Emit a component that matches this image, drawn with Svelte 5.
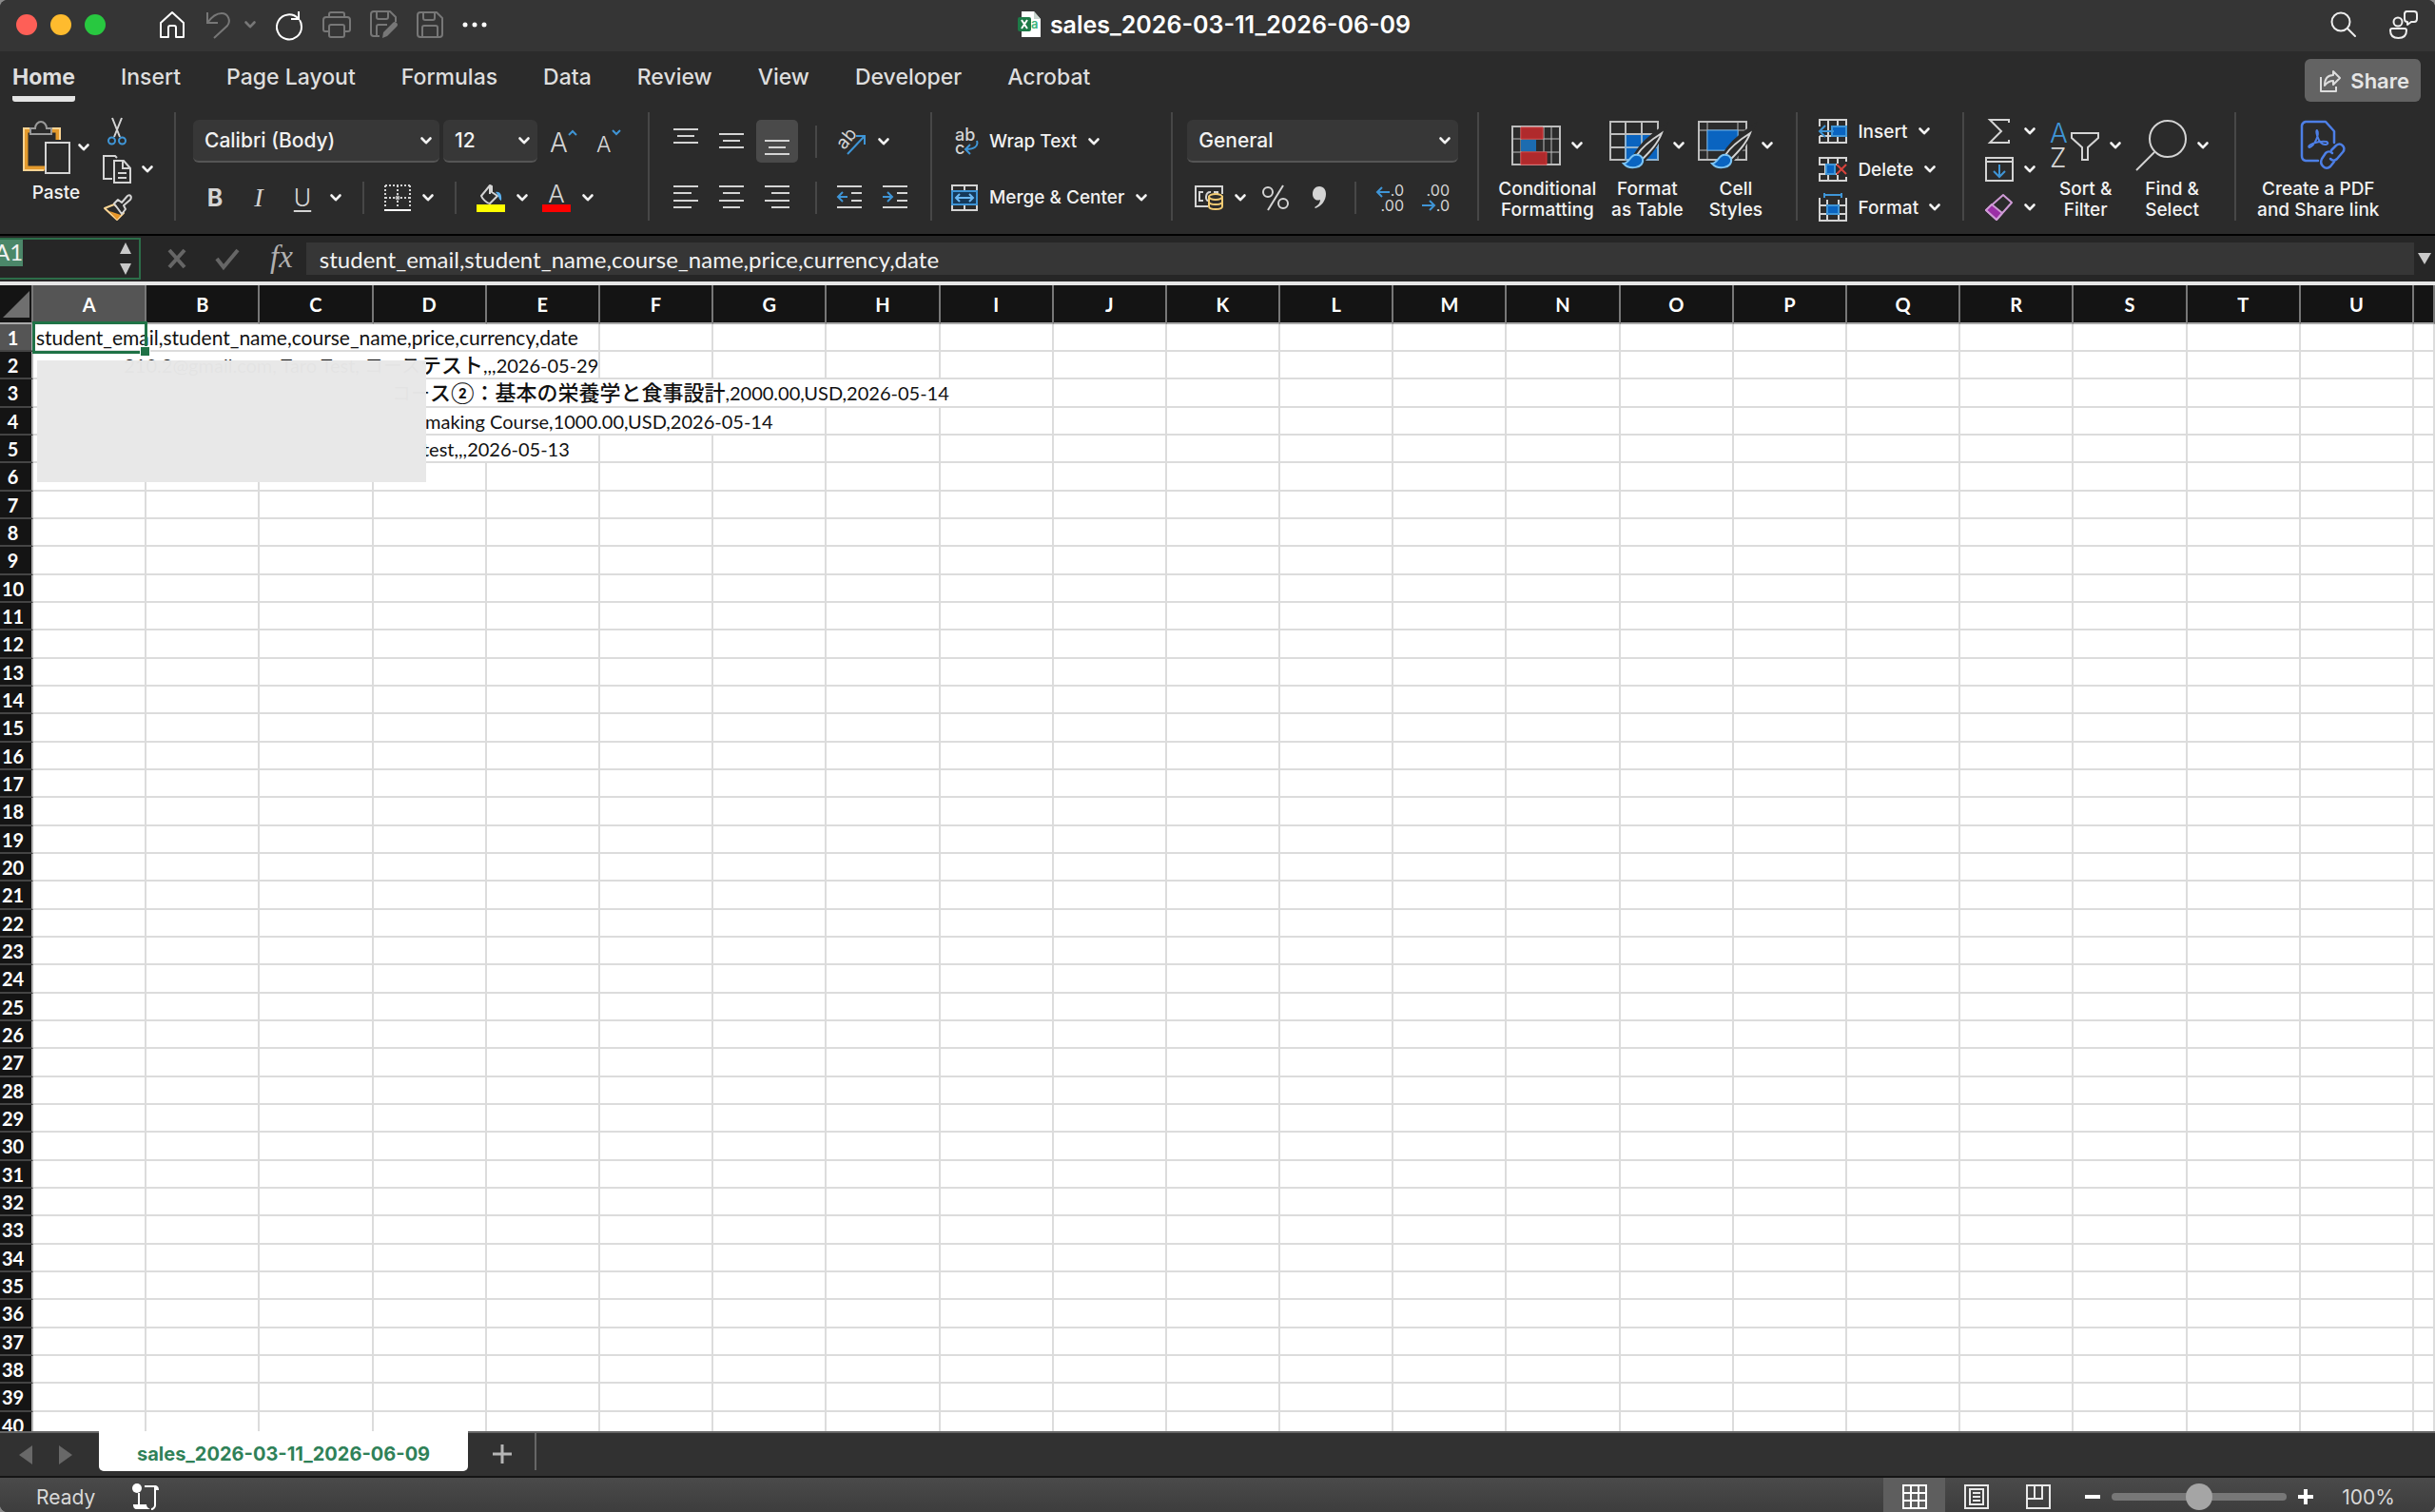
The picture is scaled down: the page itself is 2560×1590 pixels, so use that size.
<script lang="ts">
	interface Row {
		span: number;
		lead?: string;
		leadWidth?: number;
		ja?: string;
		text: string;
	}

	const COLUMNS = 'ABCDEFGHIJKLMNOPQRSTU'.split('');
	const ROW_COUNT = 40;
	const FILE_NAME = 'sales_2026-03-11_2026-06-09';
	const HEADER_LINE = 'student_email,student_name,course_name,price,currency,date';

	const tabs = ['Home', 'Insert', 'Page Layout', 'Formulas', 'Data', 'Review', 'View', 'Developer', 'Acrobat'];

	const data: Record<number, Row> = {
		1: { span: 5, text: HEADER_LINE },
		2: { span: 5, lead: '210.2@gmail.com, Taro Test, コース', leadWidth: 404, ja: 'テスト', text: ',,,2026-05-29' },
		3: { span: 9, lead: 'コー', leadWidth: 414, ja: 'ス②：基本の栄養学と食事設計', text: ',2000.00,USD,2026-05-14' },
		4: { span: 7, lead: '', leadWidth: 409, text: 'making Course,1000.00,USD,2026-05-14' },
		5: { span: 5, lead: '', leadWidth: 406, text: 'test,,,2026-05-13' }
	};

	const rows = Array.from({ length: ROW_COUNT }, (_, i) => i + 1);

	let activeTab = $state('Home');
	let zoom = $state(100);

	function restColumns(row: number) {
		const used = data[row]?.span ?? 0;
		return COLUMNS.slice(used);
	}
</script>

{#snippet chevron()}
	<svg class="chevron" width="12" height="8" viewBox="0 0 12 8" aria-hidden="true">
		<path d="M1.5 1.5 6 6.2 10.5 1.5" fill="none" stroke="currentColor" stroke-width="2.6" stroke-linecap="round" stroke-linejoin="round" />
	</svg>
{/snippet}

{#snippet lines(rowsOfLines: number[][])}
	<svg width="26" height="36" viewBox="0 0 26 36" stroke="#d4d4d4" stroke-width="2">
		{#each rowsOfLines as [x1, x2, y]}
			<path d="M{x1} {y}H{x2}" />
		{/each}
	</svg>
{/snippet}

{#snippet brush()}
	<path d="M56 9C44 17 33 28 28 37l6 5C42 34 51 22 56 9z" fill="#2b2b2b" stroke="#2b2b2b" stroke-width="6" />
	<path d="M55 13C44 20 34 28 29 36l5 5C42 33 51 24 55 13z" fill="#2b2b2b" stroke="#d4d4d4" stroke-width="2" />
	<path d="M30 36c-8-2-9 9-15 9 6 7 22 5 20-5-1-2-3-4-5-4z" fill="#0a64c0" stroke="#7cc4f4" stroke-width="2" />
{/snippet}

<div class="window">
	<header class="titlebar">
		<div class="lights">
			<button class="light red" aria-label="Close"></button>
			<button class="light amber" aria-label="Minimize"></button>
			<button class="light green" aria-label="Zoom window"></button>
		</div>
		<div class="quick">
			<button aria-label="Home">
				<svg width="28" height="30" viewBox="0 0 28 30" fill="none" stroke="#fff" stroke-width="2" stroke-linejoin="round">
					<path d="M2 13 14 2l12 11v15h-8V18a2 2 0 0 0-2-2h-4a2 2 0 0 0-2 2v10H2z" />
				</svg>
			</button>
			<span class="undo">
				<button aria-label="Undo">
					<svg width="28" height="30" viewBox="0 0 28 30" fill="none" stroke="#777" stroke-width="2">
						<path d="M3 2v11h11M3 13C8 6 13 3 18 3c7 0 10 8 6 13L10 29" />
					</svg>
				</button>
				<button class="dim" aria-label="Undo history">{@render chevron()}</button>
			</span>
			<button aria-label="Repeat">
				<svg width="30" height="30" viewBox="0 0 30 30" fill="none" stroke="#fff" stroke-width="2">
					<path d="M25 1v8h-8M24.500 8.500A13 13 0 1 0 28 17c0-3-.6-5-2-7" />
				</svg>
			</button>
			<button aria-label="Print">
				<svg width="30" height="28" viewBox="0 0 30 28" fill="none" stroke="#777" stroke-width="2" stroke-linejoin="round">
					<path d="M7 6V3a2 2 0 0 1 2-2h12a2 2 0 0 1 2 2v3M7 21H3a2 2 0 0 1-2-2V9a3 3 0 0 1 3-3h22a3 3 0 0 1 3 3v10a2 2 0 0 1-2 2h-4" />
					<rect x="7" y="14" width="16" height="13" rx="2" />
				</svg>
			</button>
			<button aria-label="Save as">
				<svg width="29" height="30" viewBox="0 0 29 30" fill="none" stroke="#777" stroke-width="2" stroke-linejoin="round">
					<path d="M10 27H4a3 3 0 0 1-3-3V4a3 3 0 0 1 3-3h17l6 6v5M7 1v6a2 2 0 0 0 2 2h8a2 2 0 0 0 2-2V1M7 27V17a2 2 0 0 1 2-2h9" />
					<path d="m14 23 10-10a2.500 2.500 0 0 1 4 4L18 27l-5 2z" fill="#777" stroke="none" />
				</svg>
			</button>
			<button aria-label="Save">
				<svg width="28" height="28" viewBox="0 0 28 28" fill="none" stroke="#777" stroke-width="2" stroke-linejoin="round">
					<path d="M4 1h17l6 6v17a3 3 0 0 1-3 3H4a3 3 0 0 1-3-3V4a3 3 0 0 1 3-3zM7 1v6a2 2 0 0 0 2 2h8a2 2 0 0 0 2-2V1M6 27V17a2 2 0 0 1 2-2h12a2 2 0 0 1 2 2v10" />
				</svg>
			</button>
			<button aria-label="More commands">
				<svg width="26" height="6" viewBox="0 0 26 6" fill="#fff">
					<circle cx="3" cy="3" r="2.500" /><circle cx="13" cy="3" r="2.500" /><circle cx="23" cy="3" r="2.500" />
				</svg>
			</button>
		</div>
		<h1>
			<svg width="25" height="28" viewBox="0 0 25 28" aria-hidden="true">
				<path d="M4 0h13l7 8v19H4z" fill="#fff" />
				<path d="M17 0v8h7z" fill="#c9d6cf" />
				<rect x="0" y="6" width="14" height="15" rx="2" fill="#1d7a47" />
				<path d="m4 9 6 9M10 9l-6 9" stroke="#fff" stroke-width="2" />
				<text x="14" y="18" font-size="13" fill="#3cb47c">a</text>
			</svg>
			{FILE_NAME}
		</h1>
		<div class="corner">
			<button aria-label="Search">
				<svg width="28" height="28" viewBox="0 0 28 28" fill="none" stroke="#eee" stroke-width="2" stroke-linecap="round">
					<circle cx="11" cy="11" r="9.500" /><path d="m18 18 8 8" />
				</svg>
			</button>
			<button aria-label="Comments and people">
				<svg width="30" height="30" viewBox="0 0 30 30" fill="none" stroke="#eee" stroke-width="2" stroke-linejoin="round">
					<circle cx="9" cy="12" r="4.500" />
					<path d="M3 19h13a2 2 0 0 1 2 2c0 5-3 8-8.500 8S1 26 1 21a2 2 0 0 1 2-2zM18 1h8a3 3 0 0 1 3 3v5a3 3 0 0 1-3 3h-3l-4 3v-3c-2 0-3-1-3-3V4a3 3 0 0 1 2-3z" />
				</svg>
			</button>
		</div>
	</header>

	<nav class="tabs" aria-label="Ribbon tabs">
		{#each tabs as tab}
			<button class="tab" class:active={tab === activeTab} onclick={() => (activeTab = tab)}>{tab}</button>
		{/each}
		<button class="share">
			<svg width="24" height="24" viewBox="0 0 24 24" fill="none" stroke="#ddd" stroke-width="2" stroke-linejoin="round" aria-hidden="true">
				<path d="M2 8v15h16v-5M15 2l7 7-7 7v-4c-4 0-6 1-9 5 0-7 3-11 9-11z" />
			</svg>
			Share
		</button>
	</nav>

	<div class="ribbon">
		<section class="group clipboard" aria-label="Clipboard">
			<button class="big paste">
				<span class="big-icon">
					<svg width="50" height="56" viewBox="0 0 50 56" fill="none" stroke-width="2">
						<path d="M10 10H3v40h20M30 10h7v10" stroke="#e39a2d" stroke-width="5" />
						<path d="M9 8H1v44h21M30 8h9v12" stroke="#f9d494" />
						<path d="M8 14V8h5c0-4 3-7 6-7s6 3 6 7h5v6z" fill="#2b2b2b" stroke="#999" />
						<rect x="24" y="23" width="25" height="32" fill="#2b2b2b" stroke="#d4d4d4" />
					</svg>
					{@render chevron()}
				</span>
				Paste
			</button>
			<div class="stack">
				<button aria-label="Cut">
					<span class="icon-box">
						<svg width="20" height="30" viewBox="0 0 20 30" fill="none" stroke-width="2">
							<path d="m5 1 8 20M15 1 7 21" stroke="#d4d4d4" />
							<circle cx="4.500" cy="25" r="3.500" stroke="#3f95d6" /><circle cx="15.500" cy="25" r="3.500" stroke="#3f95d6" />
						</svg>
					</span>
				</button>
				<button aria-label="Copy">
					<span class="icon-box">
						<svg width="30" height="30" viewBox="0 0 30 30" fill="none" stroke="#d4d4d4" stroke-width="2">
							<path d="M10 25H1V1h12l2 2M12 6h10l7 8v15H12zM21 6v8h8M16 19h9M16 24h9" />
						</svg>
					</span>
					{@render chevron()}
				</button>
				<button aria-label="Format painter">
					<span class="icon-box">
						<svg width="30" height="28" viewBox="0 0 30 28" stroke-width="2" stroke-linejoin="round">
							<path d="M2 15 12 11l10 9-7 7z" fill="#2b2b2b" stroke="#f9d494" />
							<path d="m7 18 12 4-4 5z" fill="#e8972a" />
							<path d="m12 10 4-4 4 3 6-7c3-2 5 1 3 4l-7 6 2 4-4 5z" fill="#2b2b2b" stroke="#d4d4d4" />
						</svg>
					</span>
				</button>
			</div>
		</section>

		<section class="group rows font" aria-label="Font">
			<div class="row">
				<span class="picker family">
					<select aria-label="Font family"><option>Calibri (Body)</option></select>
					{@render chevron()}
				</span>
				<span class="picker size">
					<select aria-label="Font size"><option>12</option></select>
					{@render chevron()}
				</span>
				<button class="grow" aria-label="Increase font size">
					<svg width="28" height="30" viewBox="0 0 28 30">
						<text x="0" y="26" font-size="28" font-weight="300" fill="#d4d4d4">A</text>
						<path d="m20 8 4-4 4 4" fill="none" stroke="#3f95d6" stroke-width="2" />
					</svg>
				</button>
				<button class="grow" aria-label="Decrease font size">
					<svg width="28" height="30" viewBox="0 0 28 30">
						<text x="0" y="26" font-size="23" font-weight="300" fill="#d4d4d4">A</text>
						<path d="m17 3 4 4 4-4" fill="none" stroke="#3f95d6" stroke-width="2" />
					</svg>
				</button>
			</div>
			<div class="row">
				<button class="letter bold">B</button>
				<button class="letter italic">I</button>
				<button class="letter underline">U</button>
				<button class="drop tight" aria-label="Underline style">{@render chevron()}</button>
				<span class="sep"></span>
				<button class="drop" aria-label="Borders">
					<svg width="28" height="28" viewBox="0 0 28 28" fill="none" stroke="#d4d4d4" stroke-width="2">
						<path d="M1 1h26M1 14h26M1 1v24M27 1v24M14 1v24" stroke-dasharray="2 2" />
						<circle cx="14" cy="14" r="2" stroke-width="1" /><path d="M0 27h28" stroke="#fff" />
					</svg>
					{@render chevron()}
				</button>
				<span class="sep"></span>
				<button class="drop" aria-label="Fill color">
					<svg width="30" height="30" viewBox="0 0 30 30">
						<path d="m5 13 9-11 2 1v6l6 4-8 8c-3 0-8-5-9-8zM14 2v9" fill="none" stroke="#d4d4d4" stroke-width="2" stroke-linejoin="round" />
						<path d="M20 9c4-1 7 2 6 9-3-1-2-5-6-9z" fill="#5ab0ee" />
						<rect y="22" width="30" height="8" fill="#ffff00" />
					</svg>
					{@render chevron()}
				</button>
				<button class="drop" aria-label="Font color">
					<svg width="30" height="30" viewBox="0 0 30 30">
						<text x="15" y="20" font-size="26" font-weight="300" fill="#d4d4d4" text-anchor="middle">A</text>
						<rect y="22" width="30" height="8" fill="#fd0100" />
					</svg>
					{@render chevron()}
				</button>
			</div>
		</section>

		<section class="group rows align" aria-label="Alignment">
			<div class="row">
				<button class="cell-button" aria-label="Align top">{@render lines([[0, 26, 5], [4, 22, 12], [0, 26, 19]])}</button>
				<button class="cell-button" aria-label="Align middle">{@render lines([[0, 26, 10], [4, 22, 17], [0, 26, 24]])}</button>
				<button class="cell-button pressed" aria-label="Align bottom">{@render lines([[0, 26, 17], [4, 22, 24], [0, 26, 31]])}</button>
				<span class="sep"></span>
				<button class="drop" aria-label="Orientation">
					<svg width="31" height="30" viewBox="0 0 31 30">
						<text transform="rotate(-50 8 22)" x="6" y="23" font-size="19" fill="#d4d4d4">ab</text>
						<path d="M11 28 29 9M20 9h9v9" fill="none" stroke="#3f95d6" stroke-width="2" />
					</svg>
					{@render chevron()}
				</button>
			</div>
			<div class="row">
				<button class="cell-button" aria-label="Align left">{@render lines([[0, 26, 6], [0, 19, 13], [0, 26, 21], [0, 19, 28]])}</button>
				<button class="cell-button" aria-label="Center">{@render lines([[0, 26, 6], [4, 22, 13], [0, 26, 21], [4, 22, 28]])}</button>
				<button class="cell-button" aria-label="Align right">{@render lines([[0, 26, 6], [7, 26, 13], [0, 26, 21], [7, 26, 28]])}</button>
				<span class="sep"></span>
				<button class="indent" aria-label="Decrease indent">
					<svg width="26" height="36" viewBox="0 0 26 36" fill="none" stroke="#d4d4d4" stroke-width="2">
						<path d="M0 6h26M15 13h11M15 21h11M0 28h26" />
						<path d="M11 17H1M6 12l-5 5 5 5" stroke="#3f95d6" />
					</svg>
				</button>
				<button class="indent" aria-label="Increase indent">
					<svg width="26" height="36" viewBox="0 0 26 36" fill="none" stroke="#d4d4d4" stroke-width="2">
						<path d="M0 6h26M15 13h11M15 21h11M0 28h26" />
						<path d="M0 17h10M5 12l5 5-5 5" stroke="#3f95d6" />
					</svg>
				</button>
			</div>
		</section>

		<section class="group rows wrap" aria-label="Cell text">
			<div class="row">
				<button class="labelled">
					<svg width="28" height="30" viewBox="0 0 28 30">
						<text x="4" y="14" font-size="18" fill="#d4d4d4">ab</text>
						<text x="4" y="28" font-size="18" fill="#d4d4d4">c</text>
						<path d="M27 14c2 6-3 9-12 9M20 18l-5 5 5 5" fill="none" stroke="#3f95d6" stroke-width="2" />
					</svg>
					Wrap Text {@render chevron()}
				</button>
			</div>
			<div class="row">
				<button class="labelled">
					<svg width="28" height="28" viewBox="0 0 28 28" fill="none" stroke-width="2">
						<path d="M1 1h26v26H1zM14 1v6M14 21v6" stroke="#d4d4d4" />
						<path d="M1 7h26v14H1z" fill="#15395a" stroke="#3f95d6" />
						<path d="M5 14h18M9 10l-4 4 4 4M19 10l4 4-4 4" stroke="#6bb8f2" />
					</svg>
					Merge &amp; Center {@render chevron()}
				</button>
			</div>
		</section>

		<section class="group rows number" aria-label="Number">
			<div class="row">
				<span class="picker format">
					<select aria-label="Number format"><option>General</option></select>
					{@render chevron()}
				</span>
			</div>
			<div class="row number-row">
				<button class="drop" aria-label="Accounting format">
					<svg width="30" height="26" viewBox="0 0 30 26" fill="none" stroke-width="2">
						<path d="M14 22H1V1h28v8" stroke="#d4d4d4" />
						<path d="M9 7H5v9h4M17 7c-6-1-6 9-3 9M20 7h4v3" stroke="#d4d4d4" />
						<path d="M15 12v10c0 4 14 4 14 0V12z" fill="#2b2b2b" stroke="#f3cc74" />
						<ellipse cx="22" cy="12" rx="7" ry="3" fill="#2b2b2b" stroke="#f3cc74" />
						<path d="M15 17c0 4 14 4 14 0" stroke="#f3cc74" />
					</svg>
					{@render chevron()}
				</button>
				<button class="letter" aria-label="Percent style">
					<svg width="28" height="28" viewBox="0 0 28 28" fill="none" stroke="#d4d4d4" stroke-width="2">
						<circle cx="6" cy="8" r="5" /><circle cx="22" cy="20" r="5" /><path d="M22 1 6 27" />
					</svg>
				</button>
				<button class="letter" aria-label="Comma style">
					<svg width="14" height="24" viewBox="0 0 14 24" fill="#d4d4d4">
						<path d="M7 0c5 0 7 4 7 8 0 7-5 13-11 15l-1-1c4-2 6-5 6-8-5 2-8-2-8-6 0-5 3-8 7-8z" />
					</svg>
				</button>
				<span class="sep"></span>
				<span class="decimals">
					<button aria-label="Increase decimal">
						<svg width="30" height="30" viewBox="0 0 30 30">
							<text x="29" y="13" font-size="16" fill="#d4d4d4" text-anchor="end">.0</text>
							<text x="29" y="29" font-size="16" fill="#d4d4d4" text-anchor="end">.00</text>
							<path d="M14 9H1M6 4 1 9l5 5" fill="none" stroke="#3f95d6" stroke-width="2" />
						</svg>
					</button>
					<button aria-label="Decrease decimal">
						<svg width="30" height="30" viewBox="0 0 30 30">
							<text x="29" y="13" font-size="16" fill="#d4d4d4" text-anchor="end">.00</text>
							<text x="29" y="29" font-size="16" fill="#d4d4d4" text-anchor="end">.0</text>
							<path d="M0 23h13M8 18l5 5-5 5" fill="none" stroke="#3f95d6" stroke-width="2" />
						</svg>
					</button>
				</span>
			</div>
		</section>

		<section class="group styles" aria-label="Styles">
			<button class="big">
				<span class="big-icon">
					<svg width="52" height="42" viewBox="0 0 52 42" fill="none" stroke="#bdbdbd" stroke-width="2">
						<path d="M1 14h50M1 28h50M10 1v40M42 1v40M34 1v40" stroke-width="1" />
						<rect x="1" y="1" width="50" height="40" />
						<path d="M10 2h23v12H10zM10 28h27v13H10z" fill="#b02a2c" stroke="#d33a3c" stroke-width="1" />
						<path d="M10 15h16v12H10z" fill="#1c6cb0" stroke="none" />
						<path d="M26 15h7v12h-7z" fill="#2b2b2b" stroke="none" />
					</svg>
					{@render chevron()}
				</span>
				Conditional<br />Formatting
			</button>
			<button class="big">
				<span class="big-icon">
					<svg width="56" height="52" viewBox="0 0 56 52" fill="none" stroke="#bdbdbd" stroke-width="2">
						<path d="M17 15h34v26H17z" fill="#0a64c0" stroke="none" />
						<path d="M1 1h50v40H1zM1 14h50M1 28h50M17 1v40M34 1v40" />
						<path d="M18 28h33M34 15v26M51 15v26H17V15" stroke="#5da9e8" stroke-width="1" />
						{@render brush()}
					</svg>
					{@render chevron()}
				</span>
				Format<br />as Table
			</button>
			<button class="big">
				<span class="big-icon">
					<svg width="56" height="52" viewBox="0 0 56 52" fill="none" stroke="#bdbdbd" stroke-width="2">
						<path d="M1 1h50v40H1z" />
						<path d="M10 1v40M42 1v40M1 10h50M1 31h50" stroke-width="1" />
						<path d="M10 10h32v21H10z" fill="#0a64c0" stroke="#5da9e8" stroke-width="1" />
						{@render brush()}
					</svg>
					{@render chevron()}
				</span>
				Cell<br />Styles
			</button>
		</section>

		<section class="group cells" aria-label="Cells">
			<div class="stack">
				<button class="labelled">
					<svg width="30" height="26" viewBox="0 0 30 26" fill="none" stroke="#d4d4d4" stroke-width="2">
						<path d="M1 8V1h28v24H1v-7M1 18h28M10 1v24M20 1v24" />
						<path d="M14 8h15v10H14z" fill="#0a64c0" stroke="#3f95d6" />
						<path d="M16 13H1M7 7l-6 6 6 6" stroke="#3f95d6" />
					</svg>
					Insert {@render chevron()}
				</button>
				<button class="labelled">
					<svg width="30" height="26" viewBox="0 0 30 26" fill="none" stroke="#d4d4d4" stroke-width="2">
						<path d="M29 5V1H1v7h18M1 8h6v10H1v7h28v-4M1 18h18M10 1v7M20 1v6M10 18v7M20 19v6" />
						<path d="M8 8h9v10H8z" fill="#0a64c0" stroke="#3f95d6" />
						<path d="m19 8 10 10M29 8 19 18" stroke="#d9433c" />
					</svg>
					Delete {@render chevron()}
				</button>
				<button class="labelled">
					<svg width="30" height="30" viewBox="0 0 30 30" fill="none" stroke="#d4d4d4" stroke-width="2">
						<path d="M1 5v24h28V5M1 13h28M1 22h28M9 7v22M21 7v22" />
						<path d="M9 13h12v9H9z" fill="#0a64c0" stroke="#3f95d6" />
						<path d="M6 2h18M6 0v5M24 0v5" stroke="#3f95d6" />
					</svg>
					Format {@render chevron()}
				</button>
			</div>
		</section>

		<section class="group editing" aria-label="Editing">
			<div class="stack">
				<button aria-label="AutoSum">
					<span class="icon-box">
						<svg width="24" height="26" viewBox="0 0 24 26" fill="none" stroke="#d4d4d4" stroke-width="2">
							<path d="M22 4V1H2l12 12L2 25h20v-3" />
						</svg>
					</span>
					{@render chevron()}
				</button>
				<button aria-label="Fill">
					<span class="icon-box">
						<svg width="30" height="26" viewBox="0 0 30 26" fill="none" stroke="#d4d4d4" stroke-width="2">
							<path d="M1 1h28v24H1zM1 5h28" />
							<path d="M15 8v13M9 15l6 6 6-6" stroke="#3f95d6" />
						</svg>
					</span>
					{@render chevron()}
				</button>
				<button aria-label="Clear">
					<span class="icon-box">
						<svg width="30" height="28" viewBox="0 0 30 28" fill="none" stroke-width="2" stroke-linejoin="round">
							<path d="M1 17 19 1l9 8-16 18z" stroke="#cf9bd6" />
							<path d="m1 17 6-6 11 9-6 7z" fill="#9b2fa6" stroke="#cf9bd6" />
						</svg>
					</span>
					{@render chevron()}
				</button>
			</div>
			<button class="big">
				<span class="big-icon">
					<svg width="52" height="52" viewBox="0 0 52 52" fill="none" stroke="#d4d4d4" stroke-width="2">
						<text x="0" y="23" font-size="28" font-weight="300" fill="#3f95d6" stroke="none">A</text>
						<text x="0" y="49" font-size="28" font-weight="300" fill="#d4d4d4" stroke="none">Z</text>
						<path d="M23 13h28v5L40 28v13h-6V28L23 18z" />
					</svg>
					{@render chevron()}
				</span>
				Sort &amp;<br />Filter
			</button>
			<button class="big">
				<span class="big-icon">
					<svg width="54" height="54" viewBox="0 0 54 54" fill="none" stroke="#d4d4d4" stroke-width="2">
						<circle cx="34" cy="20" r="19" /><path d="M20 34 1 53" />
					</svg>
					{@render chevron()}
				</span>
				Find &amp;<br />Select
			</button>
		</section>

		<section class="group acrobat" aria-label="Adobe Acrobat">
			<button class="big">
				<span class="big-icon">
					<svg width="58" height="54" viewBox="-10 0 58 54" fill="none" stroke="#4d7fe6" stroke-width="2.500" stroke-linecap="round" stroke-linejoin="round">
						<path d="M19 43H6a5 5 0 0 1-4-5V6a5 5 0 0 1 4-4h21l9 10v12" />
						<path d="M18 11c3 4-3 17-8 18-4-2 8-7 18-6 4 2-2 5-6 1-3-3-6-12-4-13z" stroke-width="2" />
						<path d="m33 32 5-5c5-4 11 2 7 7l-6 7c-2 2-5 2-7 0M34 35c-2-2-5-2-7 0l-4 6c-3 6 4 13 9 8l4-5" />
					</svg>
				</span>
				Create a PDF<br />and Share link
			</button>
		</section>
	</div>

	<div class="formula-bar">
		<div class="name-box">
			<input aria-label="Name box" value="A1" />
			<svg width="14" height="34" viewBox="0 0 14 34" fill="#c9c9c9" aria-hidden="true">
				<path d="M7 0l6 12H1zM7 34 1 22h12z" />
			</svg>
		</div>
		<button class="entry" aria-label="Cancel entry">
			<svg width="24" height="24" viewBox="0 0 24 24" fill="none" stroke="#666" stroke-width="4"><path d="m4 3 16 18M20 3 4 21" /></svg>
		</button>
		<button class="entry confirm" aria-label="Confirm entry">
			<svg width="26" height="24" viewBox="0 0 26 24" fill="none" stroke="#666" stroke-width="4"><path d="m2 12 7 9L24 3" /></svg>
		</button>
		<button class="fx" aria-label="Insert function">fx</button>
		<input class="formula" aria-label="Formula" value={HEADER_LINE} />
		<button class="expand" aria-label="Expand formula bar">
			<svg width="14" height="14" viewBox="0 0 14 14" fill="#c9c9c9"><path d="M0 1h14L7 13z" /></svg>
		</button>
	</div>

	<main class="sheet">
		<table>
			<colgroup>
				<col class="row-col" />
				{#each COLUMNS as column (column)}<col />{/each}
				<col class="edge-col" />
			</colgroup>
			<thead>
				<tr>
					<th class="select-all">
						<svg width="28" height="28" viewBox="0 0 28 28" aria-hidden="true"><path d="M28 0v28H0z" fill="#6f6f6f" /></svg>
					</th>
					{#each COLUMNS as column (column)}
						<th scope="col" class:selected={column === 'A'}>{column}</th>
					{/each}
					<th></th>
				</tr>
			</thead>
			<tbody>
				{#each rows as row (row)}
					<tr>
						<th scope="row" class:selected={row === 1}>{row}</th>
						{#if data[row]}
							<td colspan={data[row].span}>
								<div class="content" class:record={row > 1}>
									{#if data[row].leadWidth}
										<span class="lead" style:width="{data[row].leadWidth}px">{data[row].lead}</span>
									{/if}
									{#if data[row].ja}<span class="ja">{data[row].ja}</span>{/if}
									{data[row].text}
								</div>
								{#if row === 1}
									<div class="cursor"></div>
								{:else if row === 2}
									<div class="redaction"></div>
								{/if}
							</td>
						{/if}
						{#each restColumns(row) as column (column)}
							<td></td>
						{/each}
						<td></td>
					</tr>
				{/each}
			</tbody>
		</table>
	</main>

	<div class="sheet-tabs">
		<button class="step" aria-label="Previous sheet">
			<svg width="14" height="20" viewBox="0 0 14 20" fill="#686868"><path d="M14 0v20L0 10z" /></svg>
		</button>
		<button class="step" aria-label="Next sheet">
			<svg width="14" height="20" viewBox="0 0 14 20" fill="#686868"><path d="M0 0v20l14-10z" /></svg>
		</button>
		<button class="sheet-tab">{FILE_NAME}</button>
		<button class="add" aria-label="Add sheet">
			<svg width="20" height="20" viewBox="0 0 20 20" stroke="#b5b5b5" stroke-width="3"><path d="M10 0v20M0 10h20" /></svg>
		</button>
	</div>

	<footer class="status">
		<span class="ready">Ready</span>
		<button aria-label="Record macro">
			<svg width="30" height="28" viewBox="0 0 30 28" fill="none" stroke="#fff" stroke-width="2">
				<circle cx="6" cy="5" r="5" fill="#fff" stroke="none" />
				<path d="M8 10v13M14 3h11v20c0 2-2 4-4 4" />
				<path d="M24 2c4 0 5 2 5 5h-4zM2 22h14c0 3 2 4 4 5H6c-3 0-4-2-4-5z" fill="#fff" stroke="none" />
			</svg>
		</button>
		<div class="views">
			<button class="view current" aria-label="Normal view">
				<svg width="26" height="26" viewBox="0 0 26 26" fill="none" stroke="#fff" stroke-width="2">
					<path d="M1 1h24v24H1zM1 9h24M1 17h24M9 1v24M17 1v24" />
				</svg>
			</button>
			<button class="view" aria-label="Page layout view">
				<svg width="26" height="26" viewBox="0 0 26 26" fill="none" stroke="#e8e8e8" stroke-width="2">
					<path d="M1 1h24v24H1zM6 5h14v16H6zM9 9h8M9 13h8M9 17h8" />
				</svg>
			</button>
			<button class="view" aria-label="Page break view">
				<svg width="26" height="26" viewBox="0 0 26 26" fill="none" stroke="#e8e8e8" stroke-width="2">
					<path d="M1 1h24v24H1zM1 15h16V1M9 1v14" />
				</svg>
			</button>
		</div>
		<button aria-label="Zoom out" onclick={() => (zoom -= 10)}>
			<svg width="16" height="16" viewBox="0 0 16 16" stroke="#fff" stroke-width="4"><path d="M0 8h16" /></svg>
		</button>
		<input class="zoom" type="range" min="10" max="190" aria-label="Zoom" bind:value={zoom} />
		<button aria-label="Zoom in" onclick={() => (zoom += 10)}>
			<svg width="16" height="16" viewBox="0 0 16 16" stroke="#fff" stroke-width="4"><path d="M8 0v16M0 8h16" /></svg>
		</button>
		<span class="percent">{zoom}%</span>
	</footer>
</div>

<style>
	:global(body) {
		margin: 0;
		background: #8a8a8a;
	}

	.window {
		--ui: Inter, 'Liberation Sans', 'Noto Sans CJK JP', sans-serif;
		--cell: Lato, 'Noto Sans CJK JP', sans-serif;
		display: flex;
		flex-direction: column;
		height: 100vh;
		overflow: hidden;
		border-radius: 8px;
		background: #2b2b2b;
		color: #f2f2f2;
		font-family: var(--ui);
		font-size: 19px;
	}

	button,
	input,
	select {
		margin: 0;
		padding: 0;
		border: 0;
		background: none;
		color: inherit;
		font: inherit;
	}

	button {
		display: flex;
		align-items: center;
		justify-content: center;
		white-space: nowrap;
	}

	svg {
		display: block;
		flex: none;
		overflow: visible;
	}

	.titlebar {
		display: grid;
		grid-template-columns: auto 1fr auto 1fr auto;
		align-items: center;
		height: 52px;
		padding-bottom: 2px;
		flex: none;
		background: #353535;
	}

	.lights {
		display: flex;
		gap: 14px;
		padding-left: 17px;
	}

	.light {
		width: 22px;
		height: 22px;
		border-radius: 50%;
	}

	.light.red {
		background: #fe5f57;
	}

	.light.amber {
		background: #febb2e;
	}

	.light.green {
		background: #28c840;
	}

	.quick {
		display: flex;
		align-items: center;
		gap: 20px;
		padding-left: 56px;
	}

	.undo {
		display: flex;
		gap: 14px;
	}

	.dim {
		color: #777;
	}

	h1 {
		display: flex;
		align-items: center;
		gap: 9px;
		margin: 0;
		padding-right: 8px;
		color: #fff;
		font-size: 25px;
		font-weight: 600;
		line-height: 30px;
		white-space: nowrap;
	}

	.corner {
		grid-column: 5;
		display: flex;
		gap: 34px;
		padding-right: 18px;
	}

	.tabs {
		display: flex;
		flex: none;
		height: 58px;
		gap: 48px;
		padding-left: 13px;
	}

	.tab {
		align-self: flex-start;
		height: 53px;
		box-sizing: border-box;
		color: #dedede;
		font-size: 23px;
		font-weight: 500;
	}

	.tab.active {
		background: linear-gradient(#e4e4e4, #e4e4e4) bottom / 100% 6px no-repeat;
		border-radius: 3px;
		font-weight: 700;
	}

	.share {
		gap: 9px;
		height: 45px;
		margin: 8px 15px 0 auto;
		padding: 0 12px 0 15px;
		border-radius: 6px;
		background: #636363;
		color: #e6e6e6;
		font-size: 22px;
		font-weight: 600;
	}

	.ribbon {
		display: flex;
		flex: none;
		padding: 6px 0 14px;
		border-bottom: 2px solid #000;
	}

	.group {
		display: flex;
		height: 114px;
		border-right: 2px solid #474747;
		box-sizing: border-box;
	}

	.group:last-child {
		border-right: 0;
	}

	.group.rows {
		flex-direction: column;
		gap: 14px;
		padding-top: 8px;
	}

	.row {
		display: flex;
		align-items: center;
		height: 45px;
	}

	.stack {
		display: grid;
		grid-template-rows: repeat(3, 40px);
		justify-items: start;
	}

	.stack button {
		gap: 11px;
	}

	.icon-box {
		display: flex;
		justify-content: center;
		width: 30px;
	}

	.big {
		flex-direction: column;
		justify-content: flex-start;
		font-weight: 500;
		line-height: 22px;
	}

	.big-icon {
		display: flex;
		align-items: center;
		gap: 11px;
		height: 74px;
	}

	.paste .big-icon {
		gap: 8px;
	}

	.labelled {
		gap: 12px;
		font-weight: 500;
	}

	.sep {
		width: 2px;
		height: 34px;
		margin: 0 21px 0 14px;
		background: #474747;
	}

	.drop {
		gap: 12px;
		padding-right: 8px;
	}

	.drop + .drop {
		margin-left: 7px;
	}

	.drop.tight {
		padding-left: 6px;
	}

	.clipboard {
		gap: 14px;
		padding: 0 22px 0 24px;
	}

	.font {
		padding: 8px 26px 0 18px;
	}

	.picker {
		display: flex;
		align-items: center;
		position: relative;
		height: 45px;
		box-sizing: border-box;
		border-bottom: 2px solid #555;
		border-radius: 6px;
		background: #373737;
	}

	.picker select {
		width: 100%;
		height: 100%;
		padding-left: 12px;
		appearance: none;
		font-size: 21px;
		font-weight: 500;
	}

	.picker .chevron,
	.picker :global(.chevron) {
		position: absolute;
		right: 8px;
		pointer-events: none;
	}

	.family {
		width: 259px;
		margin-right: 4px;
	}

	.size {
		width: 99px;
		margin-right: 13px;
	}

	.grow {
		width: 28px;
		margin-right: 21px;
	}

	.grow:last-child {
		margin-right: 0;
	}

	.letter {
		width: 46px;
		height: 45px;
		color: #d4d4d4;
		font-size: 25px;
	}

	.bold {
		font-weight: 700;
	}

	.italic {
		font-family: 'Liberation Serif', serif;
		font-size: 28px;
		font-style: italic;
	}

	.underline {
		font-weight: 300;
		text-decoration: underline;
		text-underline-offset: 4px;
		text-decoration-thickness: 2px;
	}

	.align {
		padding: 8px 24px 0 16px;
	}

	.cell-button {
		width: 44px;
		height: 45px;
		margin-right: 4px;
		border-radius: 5px;
	}

	.pressed {
		background: #4a4a4a;
	}

	.indent + .indent {
		margin-left: 22px;
	}

	.wrap {
		padding: 8px 25px 0 20px;
	}

	.number {
		padding: 8px 20px 0 15px;
	}

	.format {
		width: 285px;
	}

	.number-row {
		padding-left: 8px;
	}

	.decimals {
		display: flex;
		gap: 18px;
	}

	.styles {
		gap: 14px;
		padding: 0 24px 0 20px;
	}

	.cells {
		padding: 0 23px 0 22px;
	}

	.editing {
		gap: 15px;
		padding: 0 27px 0 22px;
	}

	.acrobat {
		padding-left: 22px;
	}

	.formula-bar {
		display: flex;
		flex: none;
		align-items: center;
		height: 48px;
		border-bottom: 4px solid #e6e6e6;
		background: #262626;
	}

	.name-box {
		display: flex;
		justify-content: space-between;
		align-items: center;
		width: 148px;
		height: 44px;
		box-sizing: border-box;
		padding-right: 7px;
		border: 2px solid #2c6d49;
		border-left: 0;
	}

	.name-box input {
		align-self: flex-start;
		width: 24px;
		height: 24px;
		padding-bottom: 4px;
		background: #4b8769;
		font-family: var(--cell);
		font-size: 24px;
		text-indent: -6px;
	}

	.entry {
		margin-left: 26px;
	}

	.confirm {
		margin-left: 28px;
	}

	.fx {
		margin: 0 14px 4px 32px;
		color: #b0b0b0;
		font-family: 'Liberation Serif', serif;
		font-size: 33px;
		font-style: italic;
		line-height: 34px;
	}

	.formula {
		flex: 1;
		height: 34px;
		padding-left: 14px;
		background: #363636;
		font-family: var(--cell);
		font-size: 24px;
	}

	.expand {
		margin: 0 4px;
	}

	.sheet {
		flex: 1;
		min-height: 0;
		overflow: hidden;
		background: #fff;
		font-family: var(--cell);
	}

	table {
		width: 100%;
		table-layout: fixed;
		border-collapse: separate;
		border-spacing: 0;
	}

	.row-col {
		width: 35px;
	}

	.edge-col {
		width: 22px;
	}

	th {
		padding: 0;
		box-sizing: border-box;
		border-right: 2px solid #777;
		border-bottom: 2px solid #444;
		background: #141414;
		color: #fff;
		font-size: 20px;
		font-weight: 700;
	}

	thead th {
		height: 41px;
		border-bottom-color: #aaa;
	}

	th.selected {
		background: #555;
	}

	.select-all svg {
		margin-left: 3px;
	}

	tbody th {
		padding-right: 6px;
		border-right-color: #b5b5b5;
		line-height: 26px;
	}

	tbody tr {
		height: 29px;
	}

	tbody tr:nth-child(3n) {
		height: 30px;
	}

	td {
		position: relative;
		height: 29px;
		padding: 0 0 0 3px;
		box-sizing: border-box;
		border-right: 2px solid #dcdcdc;
		border-bottom: 2px solid #dcdcdc;
		color: #111;
		font-size: 21px;
		line-height: 26px;
	}

	tbody tr:nth-child(3n) td {
		height: 30px;
	}

	.content {
		display: flex;
		height: 26px;
		white-space: nowrap;
	}

	.record {
		font-size: 20px;
	}

	.ja {
		font-size: 22px;
		font-weight: 500;
	}

	.lead {
		display: flex;
		flex: none;
		justify-content: flex-end;
	}

	.cursor {
		position: absolute;
		inset: -3px auto -4px -1px;
		width: calc(20% + 2px);
		box-sizing: border-box;
		border: 3px solid #1f7246;
	}

	.cursor::after {
		content: '';
		position: absolute;
		right: -6px;
		bottom: -6px;
		width: 9px;
		height: 9px;
		border: 1px solid #fff;
		background: #1f7246;
	}

	.redaction {
		position: absolute;
		z-index: 1;
		top: 9px;
		left: 4px;
		width: 409px;
		height: 128px;
		background: rgba(232, 232, 232, 0.98);
	}

	.sheet-tabs {
		display: flex;
		flex: none;
		align-items: flex-start;
		height: 49px;
		box-sizing: border-box;
		border-bottom: 2px solid #151515;
		background: #313131;
		box-shadow: inset 0 2px #666;
	}

	.step {
		height: 50px;
		margin-left: 20px;
	}

	.step + .step {
		margin: 0 28px;
	}

	.sheet-tab {
		height: 42px;
		padding: 6px 40px 0;
		box-sizing: border-box;
		border-radius: 0 0 5px 5px;
		background: #fff;
		color: #2f8158;
		font-size: 20px;
		font-weight: 700;
	}

	.add {
		height: 41px;
		padding: 7px 24px 0 26px;
		box-sizing: border-box;
		border-right: 2px solid #666;
	}

	.status {
		display: flex;
		flex: none;
		align-items: center;
		height: 36px;
		padding: 4px 42px 0 38px;
		box-sizing: border-box;
		background: linear-gradient(#4a4a4a, #3d3d3d);
		color: #d8d8d8;
		font-size: 21px;
	}

	.ready {
		margin-right: 38px;
	}

	.views {
		display: flex;
		margin: -4px 17px 0 auto;
	}

	.view {
		width: 65px;
		height: 36px;
		padding-top: 4px;
	}

	.view.current {
		background: #5e5e5e;
	}

	.zoom {
		width: 184px;
		height: 30px;
		margin: 0 12px;
		appearance: none;
	}

	.zoom::-webkit-slider-runnable-track {
		height: 8px;
		border-radius: 4px;
		background: #777;
	}

	.zoom::-webkit-slider-thumb {
		width: 28px;
		height: 28px;
		margin-top: -10px;
		border-radius: 50%;
		background: #a5a5a5;
		appearance: none;
	}

	.percent {
		margin-left: 30px;
	}
</style>
